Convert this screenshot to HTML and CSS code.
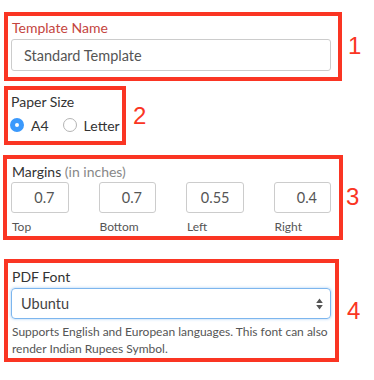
FILE: index.html
```html
<!DOCTYPE html>
<html lang="en">
<head>
  <meta charset="UTF-8" />
  <title>PDF Template Settings</title>
  <link rel="stylesheet" href="styles.css">
</head>
<body>
  <div class="settings">
    <div class="row row-name">
      <div class="box box-name">
        <label class="field-label required" for="tpl-name">Template Name</label>
        <input class="text-input" id="tpl-name" type="text" value="Standard Template">
      </div>
      <span class="marker">1</span>
    </div>

    <div class="row row-paper">
      <div class="box box-paper">
        <div class="field-label">Paper Size</div>
        <div class="radios">
          <span class="radio checked"></span><span class="radio-text">A4</span>
          <span class="radio"></span><span class="radio-text">Letter</span>
        </div>
      </div>
      <span class="marker">2</span>
    </div>

    <div class="row row-margins">
      <div class="box box-margins">
        <div class="field-label">Margins <span class="hint">(in inches)</span></div>
        <div class="margin-grid">
          <div class="margin-cell">
            <input class="num-input" type="text" value="0.7">
            <span class="cell-label">Top</span>
          </div>
          <div class="margin-cell">
            <input class="num-input" type="text" value="0.7">
            <span class="cell-label">Bottom</span>
          </div>
          <div class="margin-cell">
            <input class="num-input" type="text" value="0.55">
            <span class="cell-label">Left</span>
          </div>
          <div class="margin-cell">
            <input class="num-input" type="text" value="0.4">
            <span class="cell-label">Right</span>
          </div>
        </div>
      </div>
      <span class="marker">3</span>
    </div>

    <div class="row row-font">
      <div class="box box-font">
        <div class="field-label">PDF Font</div>
        <div class="select">
          <span>Ubuntu</span>
          <svg width="7" height="12" viewBox="0 0 7 12">
            <path d="M3.5 0.5 L6.8 5 L0.2 5 Z M3.5 11.5 L6.8 7 L0.2 7 Z" fill="#555"/>
          </svg>
        </div>
        <p class="help">Supports English and European languages. This font can also render Indian Rupees Symbol.</p>
      </div>
      <span class="marker">4</span>
    </div>
  </div>
</body>
</html>
```

FILE: styles.css
```css
body {
  margin: 0;
  background: #fff;
  font-family: Lato, "Liberation Sans", sans-serif;
  color: #333;
}

.settings {
  display: flex;
  flex-direction: column;
  padding-top: 12px;
}

.row {
  display: flex;
  align-items: center;
}

.row-paper { margin-top: 5px; }
.row-margins { margin-top: 10px; }
.row-font { margin-top: 19px; }

.box {
  border: 4px solid #fa3523;
  box-sizing: border-box;
  margin-left: 4px;
  flex-shrink: 0;
}

.marker {
  color: #fa3523;
  font-family: "Liberation Sans", sans-serif;
  font-size: 24px;
  line-height: 24px;
}

.field-label {
  display: block;
  font-size: 14px;
  line-height: 18px;
  padding-left: 1px;
}

.required {
  color: #c44540;
}

.hint {
  color: #888;
}

/* 1 */
.box-name {
  width: 338px;
  padding: 3px 7px 6px 3px;
}

.row-name .marker { margin-left: 6px; margin-top: -2px; }

.text-input {
  display: block;
  width: 320px;
  height: 32px;
  margin-top: 2px;
  box-sizing: border-box;
  border: 1px solid #ccc;
  border-radius: 3px;
  padding: 0 12px;
  font-family: Lato, "Liberation Sans", sans-serif;
  font-size: 14.5px;
  color: #555;
}

/* 2 */
.box-paper {
  width: 122px;
  padding: 3px 3px 3px 2px;
}

.row-paper .marker { margin-left: 7px; }

.radios {
  display: flex;
  align-items: center;
  height: 26px;
  margin-top: 1px;
}

.radio {
  flex-shrink: 0;
  width: 14px;
  height: 14px;
  box-sizing: border-box;
  border-radius: 50%;
  border: 1px solid #b4b4b4;
  background: #fff;
  margin-right: 7px;
}

.radio.checked {
  border: 5px solid #3b99fc;
  background: #fff;
}

.radio-text {
  font-size: 14px;
  margin-right: 14px;
  white-space: nowrap;
}

/* 3 */
.box-margins {
  width: 340px;
  margin-left: 3px;
  padding: 4px 8px 1px 4px;
}

.row-margins .marker { margin-left: 3px; margin-top: -2px; }

.margin-grid {
  display: grid;
  grid-template-columns: repeat(4, 1fr);
  gap: 30px;
  width: 320px;
  margin-top: 1px;
}

.margin-cell {
  display: flex;
  flex-direction: column;
}

.num-input {
  width: 100%;
  height: 31px;
  box-sizing: border-box;
  border: 1px solid #ccc;
  border-radius: 3px;
  padding: 0 13px 0 4px;
  text-align: right;
  font-family: Lato, "Liberation Sans", sans-serif;
  font-size: 14.5px;
  color: #555;
}

.cell-label {
  font-size: 12px;
  line-height: 16px;
  margin-top: 6px;
  padding-left: 1px;
  color: #555;
}

/* 4 */
.box-font {
  width: 335px;
  padding: 5px 4px 1px 3px;
}

.row-font .marker { margin-left: 8px; }

.select {
  display: flex;
  align-items: center;
  justify-content: space-between;
  width: 320px;
  height: 31px;
  margin-top: 2px;
  box-sizing: border-box;
  border: 1px solid #7db6ee;
  border-radius: 4px;
  box-shadow: 0 0 3px rgba(90, 160, 235, 0.55);
  padding: 0 7px 0 9px;
  font-size: 14.5px;
  color: #444;
}

.help {
  margin: 4px 0 0;
  font-size: 12px;
  line-height: 17px;
  color: #555;
  padding-left: 1px;
}
```
